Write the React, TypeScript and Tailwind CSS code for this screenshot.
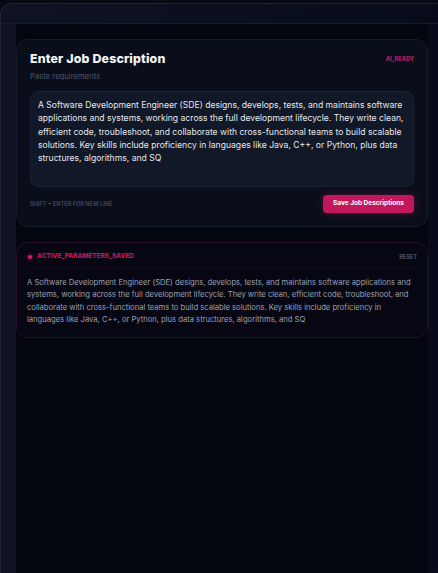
import React, { useState } from 'react';

const jd =
  'A Software Development Engineer (SDE) designs, develops, tests, and maintains software applications and systems, working across the full development lifecycle. They write clean, efficient code, troubleshoot, and collaborate with cross-functional teams to build scalable solutions. Key skills include proficiency in languages like Java, C++, or Python, plus data structures, algorithms, and SQ';

export default function App() {
  const [text, setText] = useState(jd);
  const [saved, setSaved] = useState(jd);

  return (
    <div
      className="h-[573px] overflow-hidden bg-[#070a14] pt-[3px]"
      style={{ fontFamily: 'Inter, "Noto Sans", sans-serif' }}
    >
      <div className="h-full rounded-tl-[12px] border-t border-l border-[#1f2536] bg-gradient-to-r from-[#0e1222] to-[#080c1a]">
        {/* HEADER */}
        <div className="h-[20px] border-b border-[#171c2b]" />

        {/* BODY */}
        <div className="ml-[15px] mr-[10px] h-full bg-[#03050f] pt-[15px] flex flex-col gap-[15px]">
          {/* INPUT CARD */}
          <div className="rounded-[12px] border border-[#161b29] bg-[#0a0e1b] px-[13px] pt-[11px] pb-[13px]">
            <div className="flex items-center justify-between">
              <h2 className="text-[12.4px] font-extrabold text-[#f3f4f6] tracking-[0.15px] leading-[16px]">
                Enter Job Description
              </h2>
              <span className="text-[5.6px] font-extrabold text-[#c0195e] uppercase">AI_READY</span>
            </div>
            <p className="mt-[4px] text-[7.7px] text-[#4b5468] leading-[12px]">Paste requirements</p>

            <textarea
              value={text}
              onChange={(e) => setText(e.target.value)}
              className="mt-[8px] block w-full h-[96px] resize-none rounded-[8px] border border-[#1c2233] bg-[#111827] px-[7px] py-[7px] text-[8.6px] leading-[13.3px] text-[#e5e7eb] outline-none"
            />

            <div className="mt-[8px] flex items-center justify-between">
              <span className="text-[5.6px] font-bold uppercase text-[#3a4256]">
                Shift + Enter for new line
              </span>
              <button
                onClick={() => setSaved(text)}
                className="h-[18px] w-[91px] rounded-[4px] bg-[#c2185b] text-[6.5px] font-bold text-white shadow-[0_0_8px_rgba(194,24,91,0.35)]"
              >
                Save Job Descriptions
              </button>
            </div>
          </div>

          {/* SAVED CARD */}
          <div className="rounded-[12px] border border-[#2a0f2a] bg-[#070613] px-[10px] pt-[10px] pb-[11px]">
            <div className="flex h-[8px] items-center justify-between">
              <div className="flex items-center gap-[5px] pl-[1px]">
                <span className="w-[4px] h-[4px] rounded-full bg-[#e11d63] shadow-[0_0_4px_rgba(225,29,99,0.8)]" />
                <span className="text-[6.4px] font-extrabold uppercase text-[#c0195e]">ACTIVE_PARAMETERS_SAVED</span>
              </div>
              <button onClick={() => setSaved('')} className="text-[5.6px] font-bold uppercase text-[#4b5263]">
                Reset
              </button>
            </div>
            <div className="mt-[7px] border-t border-[#160b1e] pt-[8px]">
              <p className="text-[7.62px] leading-[12.3px] text-[#9aa1b2]">{saved}</p>
            </div>
          </div>
        </div>
      </div>
    </div>
  );
}
